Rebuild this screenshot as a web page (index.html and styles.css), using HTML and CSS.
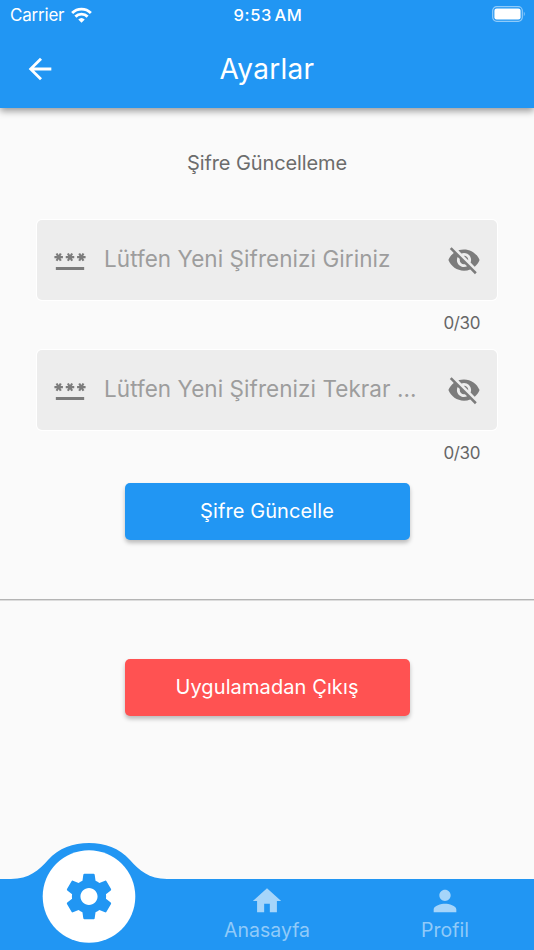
FILE: index.html
```html
<!DOCTYPE html>
<html lang="tr">
<head>
    <meta charset="UTF-8">
    <meta name="viewport" content="width=device-width, initial-scale=1.0">
    <title>Ayarlar</title>
    <link rel="stylesheet" href="styles.css">
</head>
<body>
    <svg width="0" height="0" class="symbols">
        <symbol id="icon-password" viewBox="0 0 24 24">
            <path d="M2,17h20v2H2V17z M3.15,12.95L4,11.47l0.85,1.48l1.3-0.75L5.3,10.72H7v-1.5H5.3l0.85-1.47L4.85,7L4,8.47L3.15,7l-1.3,0.75L2.7,9.22H1v1.5h1.7L1.85,12.2L3.15,12.95z M9.85,12.2l1.3,0.75L12,11.47l0.85,1.48l1.3-0.75l-0.85-1.48H15v-1.5h-1.7l0.85-1.47L12.85,7L12,8.47L11.15,7l-1.3,0.75l0.85,1.47H9v1.5h1.7L9.85,12.2z M23,9.22h-1.7l0.85-1.47L20.85,7L20,8.47L19.15,7l-1.3,0.75l0.85,1.47H17v1.5h1.7l-0.85,1.48l1.3,0.75L20,11.47l0.85,1.48l1.3-0.75l-0.85-1.48H23V9.22z"/>
        </symbol>
        <symbol id="icon-hidden" viewBox="0 0 24 24">
            <path d="M12 7c2.76 0 5 2.24 5 5 0 .65-.13 1.26-.36 1.83l2.92 2.92c1.51-1.26 2.7-2.89 3.43-4.75-1.73-4.39-6-7.5-11-7.5-1.4 0-2.74.25-3.98.7l2.16 2.16C10.74 7.13 11.35 7 12 7zM2 4.27l2.28 2.28.46.46C3.08 8.3 1.78 10.02 1 12c1.73 4.39 6 7.5 11 7.5 1.55 0 3.03-.3 4.38-.84l.42.42L19.73 22 21 20.73 3.27 3 2 4.27zM7.53 9.8l1.55 1.55c-.05.21-.08.43-.08.65 0 1.66 1.34 3 3 3 .22 0 .44-.03.65-.08l1.55 1.55c-.67.33-1.41.53-2.2.53-2.76 0-5-2.24-5-5 0-.79.2-1.53.53-2.2zm4.31-.78l3.15 3.15.02-.16c0-1.66-1.34-3-3-3l-.17.01z"/>
        </symbol>
    </svg>

    <header>
        <div class="status-bar">
            <div class="carrier">
                <span>Carrier</span>
                <svg class="wifi" viewBox="0 0 22 16">
                    <path d="M1.2 5.8a14 14 0 0 1 19.6 0" />
                    <path d="M4.6 9.7a9.2 9.2 0 0 1 12.8 0" />
                    <path class="dot" d="M7.6 12.8a5 5 0 0 1 6.8 0L11 16z" />
                </svg>
            </div>
            <span class="time">9:53 AM</span>
            <svg class="battery" viewBox="0 0 34 16">
                <rect class="shell" x="0.7" y="0.7" width="29.6" height="14.6" rx="4" />
                <rect class="level" x="2.4" y="2.6" width="26.2" height="10.8" rx="2.2" />
                <path class="cap" d="M31.8 5.6q2 2.4 0 4.8z" />
            </svg>
        </div>
        <div class="app-bar">
            <svg class="icon back" viewBox="0 0 24 24">
                <path d="M20 11H7.83l5.59-5.59L12 4l-8 8 8 8 1.41-1.41L7.83 13H20v-2z"/>
            </svg>
            <h1>Ayarlar</h1>
        </div>
    </header>

    <main>
        <h2>Şifre Güncelleme</h2>

        <div class="field">
            <svg class="icon"><use href="#icon-password"/></svg>
            <input type="text" maxlength="30" placeholder="Lütfen Yeni Şifrenizi Giriniz">
            <svg class="icon"><use href="#icon-hidden"/></svg>
        </div>
        <div class="counter">0/30</div>

        <div class="field">
            <svg class="icon"><use href="#icon-password"/></svg>
            <input type="text" maxlength="30" placeholder="Lütfen Yeni Şifrenizi Tekrar ...">
            <svg class="icon"><use href="#icon-hidden"/></svg>
        </div>
        <div class="counter">0/30</div>

        <button class="btn">Şifre Güncelle</button>
        <hr>
        <button class="btn btn-exit">Uygulamadan Çıkış</button>
    </main>

    <nav>
        <svg class="hump" viewBox="0 0 178 108">
            <path class="wave" d="M0 37H11C29 37 39 28 48 18C59 6 73 1 89 1C105 1 119 6 130 18C139 28 149 37 167 37H178V108H0z"/>
            <circle cx="89" cy="54.5" r="46.3"/>
            <svg x="60.5" y="26" width="57" height="57" viewBox="0 0 24 24">
                <path class="gear" d="M19.14,12.94c0.04-0.3,0.06-0.61,0.06-0.94c0-0.32-0.02-0.64-0.07-0.94l2.03-1.58c0.18-0.14,0.23-0.41,0.12-0.61l-1.92-3.32c-0.12-0.22-0.37-0.29-0.59-0.22l-2.39,0.96c-0.5-0.38-1.03-0.7-1.62-0.94L14.4,2.81c-0.04-0.24-0.24-0.41-0.48-0.41h-3.84c-0.24,0-0.43,0.17-0.47,0.41L9.25,5.35C8.66,5.59,8.12,5.92,7.63,6.29L5.24,5.33c-0.22-0.08-0.47,0-0.59,0.22L2.74,8.87C2.62,9.08,2.66,9.34,2.86,9.48l2.03,1.58C4.84,11.36,4.8,11.69,4.8,12s0.02,0.64,0.07,0.94l-2.03,1.58c-0.18,0.14-0.23,0.41-0.12,0.61l1.92,3.32c0.12,0.22,0.37,0.29,0.59,0.22l2.39-0.96c0.5,0.38,1.03,0.7,1.62,0.94l0.36,2.54c0.05,0.24,0.24,0.41,0.48,0.41h3.84c0.24,0,0.44-0.17,0.47-0.41l0.36-2.54c0.59-0.24,1.13-0.56,1.62-0.94l2.39,0.96c0.22,0.08,0.47,0,0.59-0.22l1.92-3.32c0.12-0.22,0.07-0.47-0.12-0.61L19.14,12.94z M12,15.6c-1.98,0-3.6-1.62-3.6-3.6s1.62-3.6,3.6-3.6s3.6,1.62,3.6,3.6S13.98,15.6,12,15.6z"/>
            </svg>
        </svg>
        <div class="tab tab-home">
            <svg class="icon" viewBox="0 0 24 24"><path d="M10 20v-6h4v6h5v-8h3L12 3 2 12h3v8z"/></svg>
            <span>Anasayfa</span>
        </div>
        <div class="tab tab-profile">
            <svg class="icon" viewBox="0 0 24 24"><path d="M12 12c2.21 0 4-1.79 4-4s-1.79-4-4-4-4 1.79-4 4 1.79 4 4 4zm0 2c-2.67 0-8 1.34-8 4v2h16v-2c0-2.66-5.33-4-8-4z"/></svg>
            <span>Profil</span>
        </div>
    </nav>
</body>
</html>
```
FILE: styles.css
```css
* {
    box-sizing: border-box;
}

body {
    display: flex;
    flex-direction: column;
    height: 950px;
    margin: 0;
    overflow: hidden;
    background-color: #fafafa;
    font-family: Inter, "Liberation Sans", sans-serif;
}

.symbols {
    position: absolute;
}

.icon {
    width: 34px;
    height: 34px;
    flex: none;
    fill: currentColor;
}

header {
    height: 108px;
    flex: none;
    background-color: #2196f3;
    color: #fff;
    box-shadow: 0 3px 7px rgba(0, 0, 0, 0.4);
}

.status-bar {
    display: grid;
    grid-template-columns: 1fr auto 1fr;
    align-items: center;
    height: 29px;
    padding: 0 8px 0 10px;
    font-size: 17px;
}

.carrier {
    display: flex;
    align-items: center;
    gap: 7px;
    letter-spacing: -0.2px;
}

.wifi {
    width: 21px;
    height: 16px;
    fill: none;
    stroke: #fff;
    stroke-width: 3;
}

.wifi .dot {
    fill: #fff;
    stroke: none;
}

.time {
    font-weight: 500;
    font-size: 16.5px;
    letter-spacing: 0.6px;
    word-spacing: -2.5px;
}

.battery {
    justify-self: end;
    width: 34px;
    height: 16px;
    margin-top: -2px;
    fill: #fff;
}

.battery .shell {
    fill: none;
    stroke: #fff;
    stroke-opacity: 0.5;
    stroke-width: 1.2;
}

.battery .cap {
    opacity: 0.5;
}

.app-bar {
    display: grid;
    grid-template-columns: 34px 1fr 34px;
    align-items: center;
    height: 79px;
    padding: 0 23px;
}

h1 {
    margin: 0;
    font-size: 28px;
    font-weight: 400;
    text-align: center;
    letter-spacing: 0.3px;
}

main {
    display: flex;
    flex-direction: column;
    align-items: center;
    flex: 1;
}

h2 {
    margin: 41px 0 43px;
    font-size: 20px;
    line-height: 28px;
    font-weight: 400;
    letter-spacing: -0.1px;
    color: #6c6c6c;
}

.field {
    display: flex;
    align-items: center;
    width: 460px;
    height: 80px;
    padding: 0 16px;
    border-radius: 5px;
    background-color: #ededed;
    box-shadow: 0 0 0 1px #fff;
    color: #7c7c7c;
}

.field input {
    flex: 1;
    min-width: 0;
    height: 40px;
    margin: 0 17px;
    padding: 0 0 3px;
    border: 0;
    outline: 0;
    background: none;
    font-family: inherit;
    font-size: 22.5px;
    letter-spacing: 0.05px;
}

.field input::placeholder {
    color: #9d9d9d;
}

.counter {
    width: 460px;
    height: 49.5px;
    padding: 12px 17px 0 0;
    font-size: 17px;
    line-height: 22px;
    letter-spacing: -0.4px;
    text-align: right;
    color: #666;
}

.btn {
    width: 285px;
    height: 57px;
    flex: none;
    margin: 4px 0 0;
    padding: 0 0 1px;
    border: 0;
    border-radius: 5px;
    background-color: #2196f3;
    box-shadow: 0 3px 4px rgba(0, 0, 0, 0.25);
    color: #fff;
    font-family: inherit;
    font-size: 20px;
    letter-spacing: 0.1px;
}

.btn-exit {
    margin: 0;
    background-color: #ff5252;
}

hr {
    width: 100%;
    margin: 59px 0;
    border: 0;
    border-top: 1px solid #b4b4b4;
    box-shadow: 0 1px 0 #dcdcdc;
}

nav {
    position: relative;
    display: grid;
    grid-template-columns: repeat(3, 1fr);
    height: 71px;
    flex: none;
    background-color: #2196f3;
}

/* raised bump behind the selected tab */
.hump {
    position: absolute;
    left: 0;
    bottom: 0;
    width: 178px;
    height: 108px;
    fill: #fff;
}

.hump .wave,
.hump .gear {
    fill: #2196f3;
}

.tab {
    display: flex;
    flex-direction: column;
    align-items: center;
    padding-top: 5px;
    font-size: 19.5px;
    line-height: 24px;
    letter-spacing: 0;
    color: #90caf9;
}

.tab .icon {
    fill: #a6d5fa;
}

.tab-home {
    grid-column: 2;
}

.tab-profile {
    grid-column: 3;
}
```
